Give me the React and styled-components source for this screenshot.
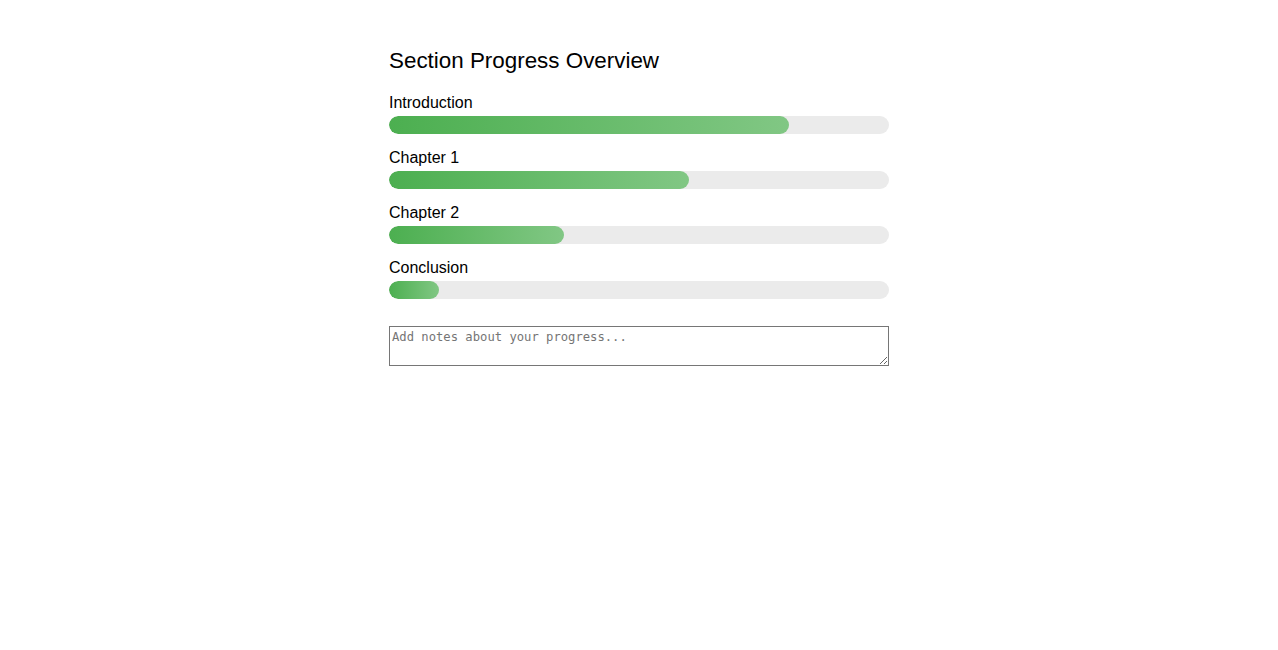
import React from "react";
import styled, { createGlobalStyle } from "styled-components";

const GlobalStyle = createGlobalStyle`
  body {
    margin: 0;
    background: #fff;
    font-family: "Liberation Sans", Arial, sans-serif;
    color: #000;
  }
`;

const Page = styled.div`
  width: 500px;
  margin: 0 auto;
  padding-top: 47px;
`;

const Title = styled.h2`
  margin: 0 0 18px 0;
  font-size: 22.4px;
  font-weight: 400;
  line-height: 28px;
`;

const Section = styled.div`
  margin-bottom: 14px;
`;

const Label = styled.div`
  font-size: 16px;
  line-height: 20px;
  margin-bottom: 3px;
`;

const Track = styled.div`
  height: 18px;
  border-radius: 9px;
  background: #ebebeb;
  overflow: hidden;
`;

const Fill = styled.div`
  height: 100%;
  border-radius: 9px;
  background: linear-gradient(90deg, #4caf50, #81c784);
`;

const Notes = styled.textarea`
  display: block;
  box-sizing: border-box;
  width: 500px;
  height: 40px;
  margin-top: 27px;
  padding: 3px 2px 2px;
  border: 1px solid #767676;
  font-family: "DejaVu Sans Mono", "Liberation Mono", monospace;
  font-size: 12.2px;

  &::placeholder {
    color: #757575;
  }
`;

const sections = [
  { name: "Introduction", value: 80 },
  { name: "Chapter 1", value: 60 },
  { name: "Chapter 2", value: 35 },
  { name: "Conclusion", value: 10 },
];

export default function App() {
  return (
    <>
      <GlobalStyle />
      <Page>
        <Title>Section Progress Overview</Title>
        {sections.map((s) => (
          <Section key={s.name}>
            <Label>{s.name}</Label>
            <Track>
              <Fill style={{ width: `${s.value}%` }} />
            </Track>
          </Section>
        ))}
        <Notes placeholder="Add notes about your progress..." />
      </Page>
    </>
  );
}
